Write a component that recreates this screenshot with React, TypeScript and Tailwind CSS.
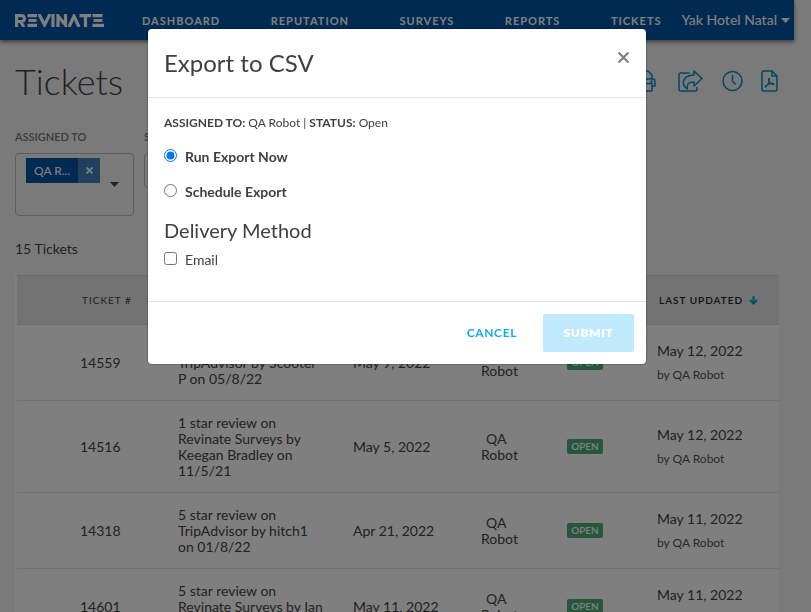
import React from "react";

const tickets = [
  { id: "14559", text: "5 star review on TripAdvisor by Scooter P on 05/8/22", created: "May 9, 2022", updated: "May 12, 2022" },
  { id: "14516", text: "1 star review on Revinate Surveys by Keegan Bradley on 11/5/21", created: "May 5, 2022", updated: "May 12, 2022" },
  { id: "14318", text: "5 star review on TripAdvisor by hitch1 on 01/8/22", created: "Apr 21, 2022", updated: "May 11, 2022" },
  { id: "14601", text: "5 star review on Revinate Surveys by Ian on 05/11/22", created: "May 11, 2022", updated: "May 11, 2022" },
];

function Logo() {
  return (
    <svg role="img" aria-label="Revinate" width="89" height="13" viewBox="0 0 89 13" fill="none" stroke="#fff" strokeWidth="3.2">
      <path d="M1.600 13V1.600H6.500A2.600 2.600 0 0 1 6.500 7.500H2M5.500 7.500L9 13" />
      <path d="M12.500 1.600H22M13.500 6.500H21.500M12.500 11.400H22" />
      <path d="M24 0L29.500 11L35 0" />
      <path d="M38 0V13" />
      <path d="M43 13V2L50.500 11V0" />
      <path d="M54 13L59 2L64 13" />
      <path d="M64.500 1.600H76M70.500 1.600V13" />
      <path d="M77.500 1.600H87.500M78.500 6.500H87.500M77.500 11.400H89" />
    </svg>
  );
}

const iconProps = { fill: "none", stroke: "currentColor", strokeWidth: 1.5, strokeLinejoin: "round", strokeLinecap: "round" } as const;

function Toolbar() {
  return (
    <div className="mr-px flex items-center text-[#0090c8]">
      <button aria-label="Print" className="mr-[22px]">
        <svg width="22" height="22" viewBox="0 0 22 22" {...iconProps}>
          <path d="M4 9V1H14L18 5V9M4 16H1V11Q1 9 3 9H19Q21 9 21 11V16H18M4 13.500H18V21H4Z" />
          <circle cx="17.500" cy="11.500" r=".5" />
        </svg>
      </button>
      <button aria-label="Share" className="mr-[19px]">
        <svg width="25" height="22" viewBox="0 0 25 22" {...iconProps}>
          <path d="M11 3H2.500Q1 3 1 4.500V19.500Q1 21 2.500 21H17.500Q19 21 19 19.500V17.500" />
          <path d="M16 1L24 8.500L16 16V12C11 12 8.500 13.500 9.500 19C3 15 3.500 5.500 16 5Z" />
        </svg>
      </button>
      <button aria-label="History" className="mr-[18px]">
        <svg width="21" height="22" viewBox="0 0 21 22" {...iconProps}>
          <circle cx="10.500" cy="11" r="9.500" />
          <path d="M10.500 5.500V11.500L13.500 14" />
        </svg>
      </button>
      <button aria-label="Download PDF">
        <svg width="17" height="22" viewBox="0 0 17 22" {...iconProps}>
          <path d="M2.500 1H11L16 6V19.500Q16 21 14.500 21H2.500Q1 21 1 19.500V2.500Q1 1 2.500 1ZM11 1V6H16" />
          <path strokeWidth="1.200" d="M8 8.500C7 8.500 7.500 11 9 13C10.500 14.500 13 15 13 14C13 12.500 8 13 4.500 16C3.500 17.500 5 17.500 6 15.500C8 12.500 9.500 8.500 8 8.500Z" />
        </svg>
      </button>
    </div>
  );
}

function Nav() {
  const link = "text-[11px] leading-[16px] font-bold tracking-[1px]";
  return (
    <nav className="flex h-10 items-center bg-[#0055a5] pl-[15px] pr-1 text-white shadow-[0_2px_4px_rgba(0,0,0,0.5)]">
      <Logo />
      <div className="ml-[38px] flex grow items-center justify-between pt-px">
        <a href="#dashboard" className={link}>DASHBOARD</a>
        <a href="#reputation" className={link}>REPUTATION</a>
        <a href="#surveys" className={link}>SURVEYS</a>
        <a href="#reports" className={link}>REPORTS</a>
        <a href="#tickets" className={link}>TICKETS</a>
      </div>
      <button className="ml-5 flex items-center gap-1 text-[14px] leading-5 font-medium">
        Yak Hotel Natal
        <svg width="9" height="5" viewBox="0 0 9 5" fill="currentColor"><path d="M0 0H9L4.500 5Z" /></svg>
      </button>
    </nav>
  );
}

function Filters() {
  const label = "block text-[11px] leading-4 font-semibold text-[#777]";
  return (
    <div className="mt-[23px] flex items-start gap-[10px]">
      <div className="w-[119px]">
        <span className={label}>ASSIGNED TO</span>
        <div className="mt-2 flex h-[63px] items-start rounded border border-[#bbb] pl-[10px] pt-1">
          <span className="flex h-[25px] text-[12px] leading-[25px] font-medium text-white">
            <span className="w-[52px] bg-[#0055a5] pl-2">QA R...</span>
            <button aria-label="Remove QA Robot" className="flex w-[22px] items-center justify-center bg-[#4080bc]">
              <svg width="7" height="7" viewBox="0 0 7 7" stroke="#fff" strokeWidth="1.800"><path d="M0.500 0.500L6.500 6.500M6.500 0.500L0.500 6.500" /></svg>
            </button>
          </span>
          <button aria-label="Open list" className="ml-[10px] mt-6">
            <svg width="9" height="5" viewBox="0 0 9 5" fill="#444"><path d="M0 0H9L4.500 5Z" /></svg>
          </button>
        </div>
      </div>
      <div className="w-[119px]">
        <span className={label}>STATUS</span>
        <div className="mt-2 h-[35px] rounded border border-[#bbb]" />
      </div>
    </div>
  );
}

function TicketTable() {
  const th = "text-left text-[10px] font-normal tracking-[1px]";
  return (
    <div className="mt-[17px] bg-white pl-[2px]">
      <table className="w-full table-fixed border-collapse">
        <colgroup>
          <col className="w-[161px]" />
          <col className="w-[175px]" />
          <col className="w-[128px]" />
          <col className="w-[86px]" />
          <col className="w-[90px]" />
          <col />
        </colgroup>
        <thead>
          <tr className="h-[49px] border-y border-[#d8d8d8] bg-[#e6e6e6] text-[#444]">
            <th className={th + " pl-[65px]"}>TICKET #</th>
            <th className={th}>DESCRIPTION</th>
            <th className={th}>CREATED</th>
            <th className={th}>ASSIGNED</th>
            <th className={th}>STATUS</th>
            <th className="pl-[2px] text-left text-[10px] font-semibold tracking-[1px] text-[#222]">
              <span className="flex items-center gap-[6px]">
                LAST UPDATED
                <svg width="9" height="9" viewBox="0 0 9 9" fill="none" stroke="#0a9ee0" strokeWidth="2"><path d="M4.500 0V7.500M1 4L4.500 7.500L8 4" /></svg>
              </span>
            </th>
          </tr>
        </thead>
        <tbody>
          {tickets.map((t) => (
            <tr key={t.id} className="border-b border-[#e6e6e6] text-[14px] leading-4 text-[#444]">
              <td className="pl-[63px]">{t.id}</td>
              <td className="pb-[13px] pr-[30px] pt-[14px]">{t.text}</td>
              <td>{t.created}</td>
              <td className="pr-10 indent-[5px]">QA Robot</td>
              <td>
                <span className="block w-9 rounded-[2px] bg-[#4caf7a] text-center text-[10px] leading-[15px] font-semibold text-white">OPEN</span>
              </td>
              <td className="leading-6">
                {t.updated}
                <span className="block text-[12px] text-[#555]">by QA Robot</span>
              </td>
            </tr>
          ))}
        </tbody>
      </table>
    </div>
  );
}

function ExportDialog() {
  return (
    <div className="fixed inset-0 flex items-start justify-center bg-black/50 pr-[17px] pt-[29px]">
      <div role="dialog" aria-labelledby="export-title" className="w-full max-w-[498px] rounded bg-white text-[#404040] shadow-[0_0_2px_rgba(0,0,0,0.6)]">
        <header className="flex h-[69px] items-center justify-between border-b border-[#dee2e6] px-4">
          <h2 id="export-title" className="text-[24px] leading-8">Export to CSV</h2>
          <button aria-label="Close" className="mb-[11px] mr-px">
            <svg width="11" height="11" viewBox="0 0 11 11" stroke="#808080" strokeWidth="2.200"><path d="M0.500 0.500L10.500 10.500M10.500 0.500L0.500 10.500" /></svg>
          </button>
        </header>
        <div className="h-[203px] px-4 pt-4">
          <p className="text-[12px] leading-[18px]"><b>ASSIGNED TO:</b> QA Robot | <b>STATUS:</b> Open</p>
          <label className="mt-4 flex h-5 items-start gap-2 text-[14px] leading-[18px] font-bold">
            <input type="radio" name="when" defaultChecked className="m-0 mt-px size-[13px]" />Run Export Now
          </label>
          <label className="mt-[15px] flex h-5 items-start gap-2 text-[14px] leading-[18px] font-bold">
            <input type="radio" name="when" className="m-0 mt-px size-[13px]" />Schedule Export
          </label>
          <h3 className="mt-[15px] text-[20px] leading-6">Delivery Method</h3>
          <label className="mt-[9px] flex h-5 items-start gap-2 text-[14px] leading-[18px]">
            <input type="checkbox" className="m-0 mt-px size-[13px]" />Email
          </label>
        </div>
        <footer className="flex h-[63px] items-center justify-end gap-[26px] border-t border-[#dee2e6] pr-3 text-[12px] font-bold tracking-wider">
          <button className="text-[#12abee]">CANCEL</button>
          <button disabled className="h-[38px] w-[91px] rounded-[2px] bg-[#bfeafc] font-extrabold text-white">SUBMIT</button>
        </footer>
      </div>
    </div>
  );
}

export default function App() {
  return (
    <div className="h-screen overflow-hidden bg-[#f4f4f4] font-['Lato',sans-serif] text-[#444]">
      <div className="pr-[17px]">
        <Nav />
        <main className="px-[15px]">
          <div className="mt-4 flex h-[50px] items-center justify-between">
            <h1 className="text-[36px] leading-[48px] font-light">Tickets</h1>
            <Toolbar />
          </div>
          <Filters />
          <p className="mt-6 text-[14px] leading-[18px]">15 Tickets</p>
          <TicketTable />
        </main>
      </div>
      <ExportDialog />
    </div>
  );
}
